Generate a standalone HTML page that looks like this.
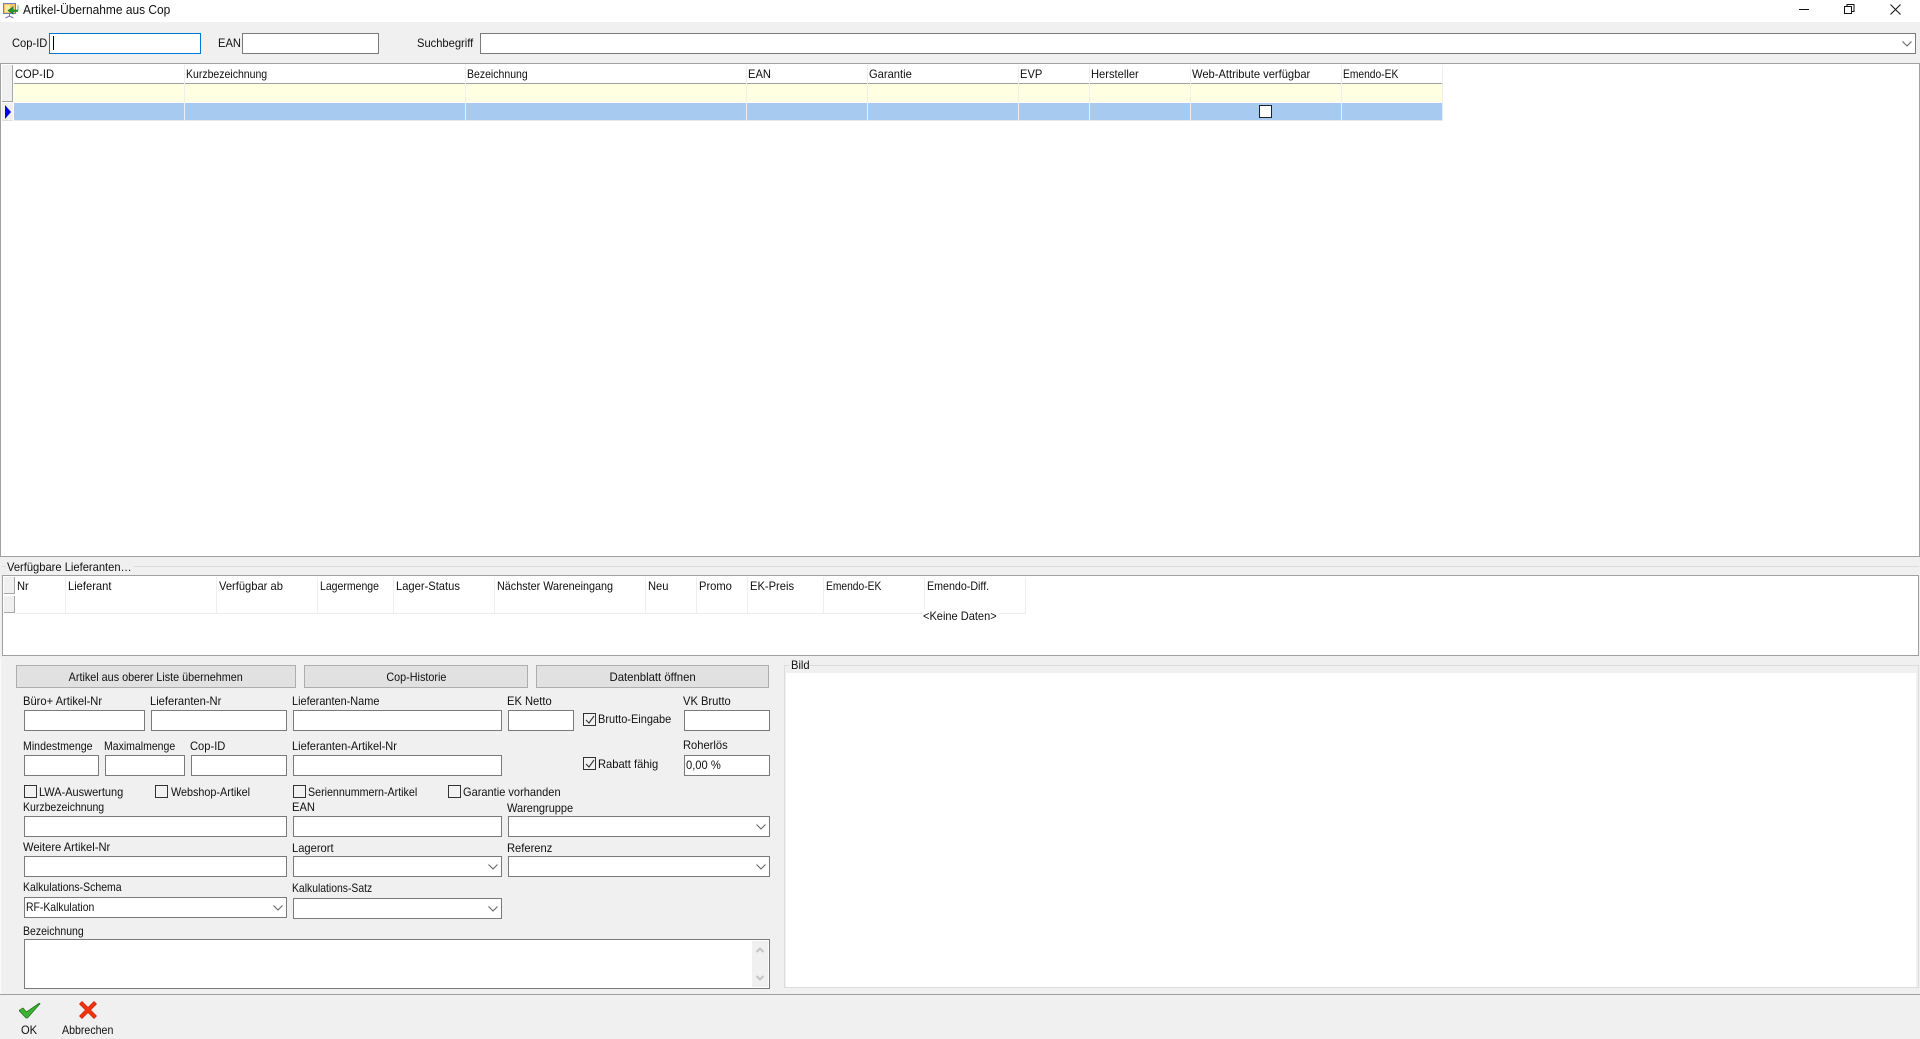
<!DOCTYPE html>
<html lang="de"><head><meta charset="utf-8"><title>Artikel-Übernahme aus Cop</title>
<style>
html,body{margin:0;padding:0;width:1920px;height:1039px;overflow:hidden;background:#f0f0f0}
body{position:relative;font:12px/14px "Liberation Sans",sans-serif;color:#101010}
div,span,svg{position:absolute;box-sizing:border-box}
.t{white-space:nowrap;height:14px;transform:scaleX(.93);transform-origin:0 50%}
.n{transform:scaleX(.875)}
.i{background:#fff;border:1px solid #7a7a7a}
.b{background:#e1e1e1;border:1px solid #adadad;text-align:center;line-height:22px}
.b span{position:static;display:inline-block;transform:scaleX(.9)}
.c{width:13px;height:13px;background:#f2f2f2;border:1px solid #333}
.ar{right:3px;top:7px;width:10px;height:6px}
</style></head><body>
<div style="left:0;top:0;width:1920px;height:22px;background:#fff"></div>
<svg style="left:2px;top:2px" width="17" height="17" viewBox="0 0 17 17"><rect x="1.500" y="1.500" width="12" height="10" fill="#f6c55e" stroke="#6f7fc4"/><rect x="3" y="3" width="5" height="7" fill="#fbe9b0"/><path d="M7.500 12v2M3.500 16l4-2 4 2" stroke="#6f6fa8" fill="none"/><path d="M16 3v5h-5V5L6 8.500 11 12V9.500h5" fill="#1f9c2e" stroke="#0f6f1c" stroke-width=".6"/></svg>
<div class="t" style="left:23px;top:3px;font-size:12.5px;transform:scaleX(.955)">Artikel-Übernahme aus Cop</div>
<svg style="left:1790px;top:0" width="125" height="20" viewBox="0 0 125 20" fill="none" stroke="#111"><path d="M9 9.500h10"/><path d="M54.500 6.500h7v7h-7zM57 6.500V4.500h7v7h-2.500"/><path d="M100.500 4.500l10 10M110.500 4.500l-10 10"/></svg>

<div class="t" style="left:12px;top:36px">Cop-ID</div>
<div style="left:49px;top:33px;width:152px;height:21px;background:#fff;border:1px solid #0078d7"></div>
<div style="left:53px;top:36px;width:1px;height:14px;background:#000"></div>
<div class="t" style="left:218px;top:36px">EAN</div>
<div class="i" style="left:242px;top:33px;width:137px;height:21px"></div>
<div class="t" style="left:417px;top:36px">Suchbegriff</div>
<div class="i" style="left:480px;top:33px;width:1436px;height:21px"><svg class="ar" viewBox="0 0 10 6" fill="none" stroke="#666" stroke-width="1.100"><path d="M.5 .5l4.500 4.500 4.500-4.500"/></svg></div>

<!-- top grid -->
<div style="left:0;top:63px;width:1920px;height:494px;background:#fff;border:1px solid #a0a0a0"></div>
<div style="left:2px;top:65px;width:11px;height:37px;background:#f0f0f0;border-right:1px solid #a8a8a8;border-bottom:1px solid #a0a0a0"></div>
<div style="left:2px;top:103px;width:11px;height:18px;background:#f0f0f0;border-bottom:1px solid #e0e0e0"></div>
<svg style="left:5px;top:105px" width="6" height="14"><path d="M0 0l6 7-6 7z" fill="#0000e0"/></svg>
<div style="left:14px;top:83px;width:1428px;height:1px;background:#a0a0a0"></div>
<div style="left:14px;top:84px;width:1428px;height:18px;background:#ffffe1"></div>
<div style="left:14px;top:103px;width:1428px;height:17px;background:#a6caf0"></div>
<div style="left:14px;top:120px;width:1428px;height:1px;background:#e8e8e8"></div>
<div style="left:184px;top:65px;width:1px;height:56px;background:#eee"></div>
<div style="left:465px;top:65px;width:1px;height:56px;background:#eee"></div>
<div style="left:746px;top:65px;width:1px;height:56px;background:#eee"></div>
<div style="left:867px;top:65px;width:1px;height:56px;background:#eee"></div>
<div style="left:1018px;top:65px;width:1px;height:56px;background:#eee"></div>
<div style="left:1089px;top:65px;width:1px;height:56px;background:#eee"></div>
<div style="left:1190px;top:65px;width:1px;height:56px;background:#eee"></div>
<div style="left:1341px;top:65px;width:1px;height:56px;background:#eee"></div>
<div style="left:1442px;top:65px;width:1px;height:56px;background:#eee"></div>
<div class="t" style="left:15px;top:67px">COP-ID</div>
<div class="t n" style="left:186px;top:67px">Kurzbezeichnung</div>
<div class="t n" style="left:467px;top:67px">Bezeichnung</div>
<div class="t" style="left:748px;top:67px">EAN</div>
<div class="t" style="left:869px;top:67px">Garantie</div>
<div class="t" style="left:1020px;top:67px">EVP</div>
<div class="t" style="left:1091px;top:67px">Hersteller</div>
<div class="t" style="left:1192px;top:67px">Web-Attribute verfügbar</div>
<div class="t" style="left:1343px;top:67px;transform:scaleX(.855)">Emendo-EK</div>
<div style="left:1259px;top:105px;width:13px;height:13px;background:#fff;border:1px solid #222"></div>

<!-- lower grid group -->
<div style="left:2px;top:566px;width:1917px;height:90px;border-top:1px solid #dcdcdc"></div>
<div style="left:6px;top:560px;width:128px;height:14px;background:#f0f0f0"></div>
<div class="t" style="left:7px;top:560px">Verfügbare Lieferanten…</div>
<div style="left:2px;top:575px;width:1917px;height:81px;background:#fff;border:1px solid #a0a0a0"></div>
<div style="left:4px;top:577px;width:11px;height:17px;background:#f0f0f0;border:1px solid #a8a8a8;border-width:0 1px 1px 0"></div>
<div style="left:4px;top:596px;width:11px;height:17px;background:#f0f0f0;border:1px solid #a8a8a8;border-width:0 1px 1px 0"></div>
<div style="left:15px;top:613px;width:1011px;height:1px;background:#ececec"></div>
<div style="left:65px;top:577px;width:1px;height:36px;background:#eee"></div>
<div style="left:216px;top:577px;width:1px;height:36px;background:#eee"></div>
<div style="left:317px;top:577px;width:1px;height:36px;background:#eee"></div>
<div style="left:393px;top:577px;width:1px;height:36px;background:#eee"></div>
<div style="left:494px;top:577px;width:1px;height:36px;background:#eee"></div>
<div style="left:645px;top:577px;width:1px;height:36px;background:#eee"></div>
<div style="left:696px;top:577px;width:1px;height:36px;background:#eee"></div>
<div style="left:747px;top:577px;width:1px;height:36px;background:#eee"></div>
<div style="left:823px;top:577px;width:1px;height:36px;background:#eee"></div>
<div style="left:924px;top:577px;width:1px;height:36px;background:#eee"></div>
<div style="left:1025px;top:577px;width:1px;height:36px;background:#eee"></div>
<div class="t" style="left:17px;top:579px">Nr</div>
<div class="t" style="left:68px;top:579px">Lieferant</div>
<div class="t" style="left:219px;top:579px">Verfügbar ab</div>
<div class="t n" style="left:320px;top:579px">Lagermenge</div>
<div class="t" style="left:396px;top:579px">Lager-Status</div>
<div class="t" style="left:497px;top:579px;transform:scaleX(.9)">Nächster Wareneingang</div>
<div class="t" style="left:648px;top:579px">Neu</div>
<div class="t" style="left:699px;top:579px">Promo</div>
<div class="t" style="left:750px;top:579px">EK-Preis</div>
<div class="t" style="left:826px;top:579px;transform:scaleX(.855)">Emendo-EK</div>
<div class="t" style="left:927px;top:579px;transform:scaleX(.89)">Emendo-Diff.</div>
<div style="left:923px;top:609px;width:76px;height:14px;background:#fff"></div>
<div class="t" style="left:923px;top:609px;transform:scaleX(.92)">&lt;Keine Daten&gt;</div>

<!-- lower panel -->
<div style="left:0;top:658px;width:1px;height:336px;background:#fafafa"></div>
<div class="b" style="left:16px;top:665px;width:280px;height:23px"><span>Artikel aus oberer Liste übernehmen</span></div>
<div class="b" style="left:304px;top:665px;width:224px;height:23px"><span>Cop-Historie</span></div>
<div class="b" style="left:536px;top:665px;width:233px;height:23px"><span style="transform:scaleX(.945)">Datenblatt öffnen</span></div>

<div class="t" style="left:23px;top:694px">Büro+ Artikel-Nr</div>
<div class="t" style="left:150px;top:694px">Lieferanten-Nr</div>
<div class="t" style="left:292px;top:694px;transform:scaleX(.91)">Lieferanten-Name</div>
<div class="t" style="left:507px;top:694px">EK Netto</div>
<div class="t" style="left:683px;top:694px">VK Brutto</div>
<div class="i" style="left:24px;top:710px;width:121px;height:21px"></div>
<div class="i" style="left:151px;top:710px;width:136px;height:21px"></div>
<div class="i" style="left:293px;top:710px;width:209px;height:21px"></div>
<div class="i" style="left:508px;top:710px;width:66px;height:21px"></div>
<div class="i" style="left:684px;top:710px;width:86px;height:21px"></div>
<div class="c" style="left:583px;top:713px"><svg style="left:1px;top:1px" width="10" height="10" fill="none" stroke="#333" stroke-width="1.100"><path d="M1 5l3 3 5-7"/></svg></div>
<div class="t" style="left:598px;top:712px;transform:scaleX(.915)">Brutto-Eingabe</div>

<div class="t" style="left:23px;top:739px;transform:scaleX(.883)">Mindestmenge</div>
<div class="t n" style="left:104px;top:739px">Maximalmenge</div>
<div class="t" style="left:190px;top:739px">Cop-ID</div>
<div class="t" style="left:292px;top:739px;transform:scaleX(.92)">Lieferanten-Artikel-Nr</div>
<div class="t" style="left:683px;top:738px">Roherlös</div>
<div class="i" style="left:24px;top:755px;width:75px;height:21px"></div>
<div class="i" style="left:105px;top:755px;width:80px;height:21px"></div>
<div class="i" style="left:191px;top:755px;width:96px;height:21px"></div>
<div class="i" style="left:293px;top:755px;width:209px;height:21px"></div>
<div class="i" style="left:684px;top:755px;width:86px;height:21px"></div>
<div class="t" style="left:686px;top:758px">0,00 %</div>
<div class="c" style="left:583px;top:757px"><svg style="left:1px;top:1px" width="10" height="10" fill="none" stroke="#333" stroke-width="1.100"><path d="M1 5l3 3 5-7"/></svg></div>
<div class="t" style="left:598px;top:757px">Rabatt fähig</div>

<div class="c" style="left:24px;top:785px"></div><div class="t" style="left:39px;top:785px;transform:scaleX(.915)">LWA-Auswertung</div>
<div class="c" style="left:155px;top:785px"></div><div class="t" style="left:171px;top:785px;transform:scaleX(.9)">Webshop-Artikel</div>
<div class="c" style="left:293px;top:785px"></div><div class="t" style="left:308px;top:785px;transform:scaleX(.89)">Seriennummern-Artikel</div>
<div class="c" style="left:448px;top:785px"></div><div class="t" style="left:463px;top:785px;transform:scaleX(.92)">Garantie vorhanden</div>

<div class="t n" style="left:23px;top:800px">Kurzbezeichnung</div>
<div class="t" style="left:292px;top:800px">EAN</div>
<div class="t" style="left:507px;top:801px;transform:scaleX(.915)">Warengruppe</div>
<div class="i" style="left:24px;top:816px;width:263px;height:21px"></div>
<div class="i" style="left:293px;top:816px;width:209px;height:21px"></div>
<div class="i" style="left:508px;top:816px;width:262px;height:21px"><svg class="ar" viewBox="0 0 10 6" fill="none" stroke="#666" stroke-width="1.100"><path d="M.5 .5l4.500 4.500 4.500-4.500"/></svg></div>

<div class="t" style="left:23px;top:840px">Weitere Artikel-Nr</div>
<div class="t" style="left:292px;top:841px">Lagerort</div>
<div class="t" style="left:507px;top:841px">Referenz</div>
<div class="i" style="left:24px;top:856px;width:263px;height:21px"></div>
<div class="i" style="left:293px;top:856px;width:209px;height:21px"><svg class="ar" viewBox="0 0 10 6" fill="none" stroke="#666" stroke-width="1.100"><path d="M.5 .5l4.500 4.500 4.500-4.500"/></svg></div>
<div class="i" style="left:508px;top:856px;width:262px;height:21px"><svg class="ar" viewBox="0 0 10 6" fill="none" stroke="#666" stroke-width="1.100"><path d="M.5 .5l4.500 4.500 4.500-4.500"/></svg></div>

<div class="t n" style="left:23px;top:880px">Kalkulations-Schema</div>
<div class="t" style="left:292px;top:881px;transform:scaleX(.865)">Kalkulations-Satz</div>
<div class="i" style="left:24px;top:897px;width:263px;height:21px"><svg class="ar" viewBox="0 0 10 6" fill="none" stroke="#666" stroke-width="1.100"><path d="M.5 .5l4.500 4.500 4.500-4.500"/></svg></div>
<div class="t" style="left:26px;top:900px;transform:scaleX(.868)">RF-Kalkulation</div>
<div class="i" style="left:293px;top:898px;width:209px;height:21px"><svg class="ar" viewBox="0 0 10 6" fill="none" stroke="#666" stroke-width="1.100"><path d="M.5 .5l4.500 4.500 4.500-4.500"/></svg></div>

<div class="t n" style="left:23px;top:924px">Bezeichnung</div>
<div class="i" style="left:24px;top:939px;width:746px;height:50px"></div>
<div style="left:752px;top:941px;width:16px;height:46px;background:#f0f0f0"></div>
<svg style="left:755px;top:946px" width="10" height="36" fill="none" stroke="#c4c4c4" stroke-width="2"><path d="M1.500 6L5 2.500 8.500 6M1.500 30L5 33.500 8.500 30"/></svg>

<!-- Bild -->
<div style="left:784px;top:665px;width:1135px;height:323px;border:1px solid #dcdcdc"></div>
<div style="left:786px;top:673px;width:1130px;height:314px;background:#fff"></div>
<div style="left:789px;top:658px;width:20px;height:14px;background:#f0f0f0"></div>
<div class="t" style="left:791px;top:658px">Bild</div>

<div style="left:0;top:994px;width:1920px;height:1px;background:#a0a0a0"></div>
<svg style="left:19px;top:1003px" width="22" height="16" viewBox="0 0 22 16"><path d="M0 7.500L4 5l3.500 4L20.500 0l.5 .7L8.500 15H7z" fill="#3fb236" stroke="#1d7a1a" stroke-width=".8" stroke-linejoin="round"/></svg>
<svg style="left:79px;top:1001px" width="18" height="18" viewBox="0 0 18 18"><path d="M3 .5l6 6 6-6 2.500 2.500-6 6 6 6-2.500 2.500-6-6-6 6L.5 15l6-6-6-6z" fill="#f5340e" stroke="#c42000" stroke-width=".7" stroke-linejoin="round"/></svg>
<div class="t" style="left:21px;top:1023px">OK</div>
<div class="t" style="left:62px;top:1023px;transform:scaleX(.885)">Abbrechen</div>
</body></html>
